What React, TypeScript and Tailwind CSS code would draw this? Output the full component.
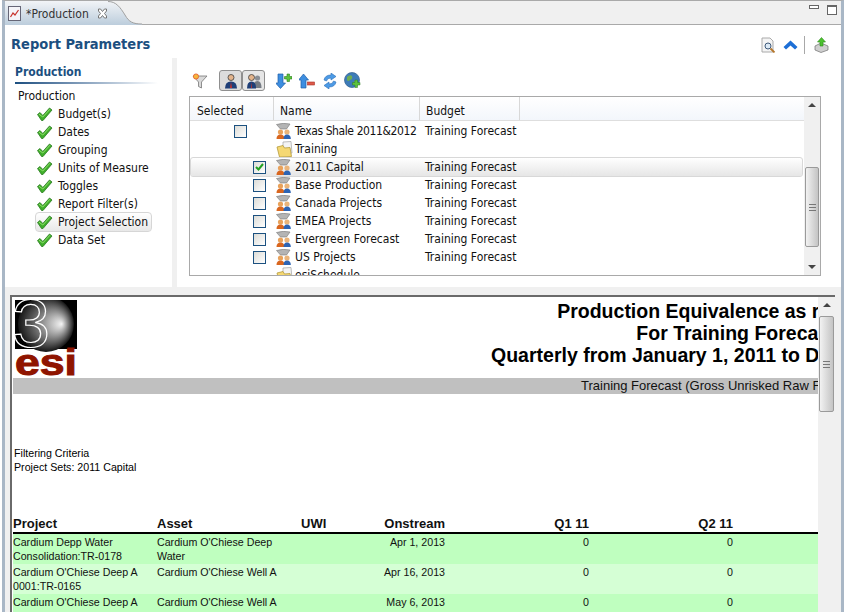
import { Fragment } from "react";

const ui = { fontFamily: '"DejaVu Sans Condensed", "Noto Sans", Tahoma, sans-serif' };
const arial = { fontFamily: '"Liberation Sans", Arial, sans-serif' };

const steps = ["Budget(s)", "Dates", "Grouping", "Units of Measure", "Toggles", "Report Filter(s)", "Project Selection", "Data Set"];

const projects = [
  { name: "Texas Shale 2011&2012", budget: "Training Forecast", box: "outer", tight: true },
  { name: "Training", budget: "", box: "none", folder: true },
  { name: "2011 Capital", budget: "Training Forecast", box: "checked", active: true },
  { name: "Base Production", budget: "Training Forecast", box: "inner" },
  { name: "Canada Projects", budget: "Training Forecast", box: "inner" },
  { name: "EMEA Projects", budget: "Training Forecast", box: "inner" },
  { name: "Evergreen Forecast", budget: "Training Forecast", box: "inner" },
  { name: "US Projects", budget: "Training Forecast", box: "inner" },
  { name: "esiSchedule", budget: "", box: "none", folder: true },
];

const rows = [
  { project: ["Cardium Depp Water", "Consolidation:TR-0178"], asset: ["Cardium O'Chiese Deep", "Water"], date: "Apr 1, 2013", bg: "bg-[#bfffbf]" },
  { project: ["Cardium O'Chiese Deep A", "0001:TR-0165"], asset: ["Cardium O'Chiese Well A"], date: "Apr 16, 2013", bg: "bg-[#d5ffd5]" },
  { project: ["Cardium O'Chiese Deep A"], asset: ["Cardium O'Chiese Well A"], date: "May 6, 2013", bg: "bg-[#bfffbf]" },
];

function Check() {
  return (
    <svg width="17" height="15" viewBox="0 0 17 15" className="shrink-0">
      <path d="M1.5 7.5 L4 5.5 L6.8 8.5 L13.5 1 L16 3 L7 13.5 L5.5 13.5 Z" fill="#3fae2a" stroke="#2b7a22" strokeWidth="0.8" />
      <path d="M3 7.2 L6.8 10 L14 2.2" fill="none" stroke="#8fe06a" strokeWidth="1" />
    </svg>
  );
}

function ProjectIcon() {
  return (
    <svg width="16" height="16" viewBox="0 0 16 16" className="shrink-0">
      <path d="M0.5 1.5 Q7 -0.5 14 1 L10.5 6 L4.5 6 Z" fill="#b4b4b4" stroke="#777" strokeWidth="0.6" />
      <circle cx="4.5" cy="9" r="2.6" fill="#e8a25c" />
      <path d="M0.5 16 Q0.5 11.5 4.5 11.5 Q8.5 11.5 8.5 16 Z" fill="#d9661f" />
      <circle cx="11" cy="9" r="2.6" fill="#eab47a" />
      <path d="M7.5 16 Q7.5 11.5 11 11.5 Q14.8 11.5 14.8 16 Z" fill="#2d64b4" />
    </svg>
  );
}

function FolderIcon() {
  return (
    <svg width="18" height="17" viewBox="0 0 18 17" className="shrink-0">
      <path d="M7 1 L15 0.5 L16 12 L7 13 Z" fill="#f4f4f4" stroke="#a0a0a0" strokeWidth="0.7" />
      <path d="M1 6 L7 4.5 L8.5 7 L14 6.5 L15.5 15.5 L3.5 16 Z" fill="#f5d873" stroke="#b59a3a" strokeWidth="0.8" />
    </svg>
  );
}

function CheckBox({ checked }: { checked?: boolean }) {
  return (
    <span className="w-[13px] h-[13px] border border-[#1c5180] bg-gradient-to-br from-[#dcdcd7] to-white flex items-center justify-center">
      {checked && (
        <svg width="9" height="8" viewBox="0 0 9 8">
          <path d="M1 4 L3.5 6.5 L8 1" fill="none" stroke="#21a121" strokeWidth="2" />
        </svg>
      )}
    </span>
  );
}

function PersonIcon({ two }: { two?: boolean }) {
  return (
    <svg width="16" height="16" viewBox="0 0 16 16">
      {two && <circle cx="11.5" cy="5" r="2.6" fill="#8a8f96" />}
      {two && <path d="M7 15 Q7 8 11.5 8 Q15.5 8 15.5 15 Z" fill="#767c84" />}
      <circle cx={two ? 5.5 : 8} cy="4.5" r="3" fill="#e3b48c" stroke="#3c3c3c" strokeWidth="0.8" />
      <path d={two ? "M1 15.5 Q1 8.5 5.5 8.5 Q10 8.5 10 15.5 Z" : "M2 15.5 Q2 8.5 8 8.5 Q14 8.5 14 15.5 Z"} fill="#1f3f78" />
      <path d={two ? "M5.5 9 L5 15 L6 15 Z" : "M8 9 L7 15 L9 15 Z"} fill="#c8322c" />
    </svg>
  );
}

function Toolbar() {
  return (
    <div className="h-[21px] flex items-center pl-[3px]">
      <svg width="16" height="16" viewBox="0 0 16 16">
        <path d="M1 3 L15 3 L9.5 9 L9.5 15 L6.5 13.5 L6.5 9 Z" fill="#d9d9d9" stroke="#777" strokeWidth="0.8" />
        <circle cx="4" cy="3.5" r="2.6" fill="#f6b73c" stroke="#e5582a" strokeWidth="0.8" />
      </svg>
      <span className="ml-[11px] w-[23px] h-[21px] rounded-[3px] border border-[#8f8f8f] bg-[#dcdcdc] flex items-center justify-center"><PersonIcon /></span>
      <span className="w-[23px] h-[21px] rounded-[3px] border border-[#8f8f8f] bg-[#e6e6e6] flex items-center justify-center"><PersonIcon two /></span>
      <svg width="16" height="16" viewBox="0 0 16 16" className="ml-[11px]">
        <path d="M2 1 L7 1 L7 10 L9.5 10 L4.5 15.5 L-0.5 10 L2 10 Z" fill="#3d8ee0" stroke="#1f5fa8" strokeWidth="0.7" />
        <path d="M11 1 L13.5 1 L13.5 3.5 L16 3.5 L16 6 L13.5 6 L13.5 8.5 L11 8.5 L11 6 L8.5 6 L8.5 3.5 L11 3.5 Z" fill="#5cc23c" stroke="#2f7d22" strokeWidth="0.6" />
      </svg>
      <svg width="16" height="16" viewBox="0 0 16 16" className="ml-[7px]">
        <path d="M4.5 1 L9.5 7 L7 7 L7 15 L2 15 L2 7 L-0.5 7 Z" fill="#3d8ee0" stroke="#1f5fa8" strokeWidth="0.7" />
        <rect x="8.5" y="9" width="7" height="3" fill="#dd5a4a" stroke="#a83226" strokeWidth="0.6" />
      </svg>
      <svg width="16" height="16" viewBox="0 0 16 16" className="ml-[7px]">
        <path d="M2 7 Q3 2 9 2 L9 0 L14 3.5 L9 7 L9 5 Q5 5 4.5 8 Z" fill="#4d9be6" stroke="#2a6db5" strokeWidth="0.6" />
        <path d="M14 9 Q13 14 7 14 L7 16 L2 12.5 L7 9 L7 11 Q11 11 11.5 8 Z" fill="#4d9be6" stroke="#2a6db5" strokeWidth="0.6" />
      </svg>
      <svg width="17" height="17" viewBox="0 0 17 17" className="ml-[6px]">
        <circle cx="8" cy="8" r="7.5" fill="#3e7cb8" stroke="#2f5f8e" strokeWidth="0.7" />
        <path d="M3 5 Q6 2 8 4 Q9 7 6 8 Q4 10 3 8 Z M10 9 Q14 8 14 11 L11 14 Z" fill="#6fae52" />
        <path d="M11 8 L13.5 8 L13.5 10.5 L16 10.5 L16 13 L13.5 13 L13.5 15.5 L11 15.5 L11 13 L8.5 13 L8.5 10.5 L11 10.5 Z" fill="#5cc23c" stroke="#2f7d22" strokeWidth="0.5" />
      </svg>
    </div>
  );
}

function Scrollbar({ top, thumb, className, noDown }: { top: number; thumb: number; className: string; noDown?: boolean }) {
  return (
    <div className={`bg-[#f0f0f0] flex flex-col shrink-0 ${className}`}>
      <div className="h-[16px] flex items-center justify-center shrink-0">
        <span className="w-0 h-0 border-x-[4px] border-x-transparent border-b-[4px] border-b-[#444]" />
      </div>
      <div className="flex-1 min-h-0">
        <div
          className="mx-px rounded-[2px] border border-[#9a9a9a] bg-gradient-to-r from-[#f2f2f2] to-[#c4c4c4] flex items-center justify-center"
          style={{ marginTop: top, height: thumb }}
        >
          <span className="w-[7px] h-[7px] border-y border-[#777] relative after:absolute after:left-0 after:right-0 after:top-[2px] after:h-px after:bg-[#777]" />
        </div>
      </div>
      {!noDown && (
        <div className="h-[16px] flex items-center justify-center shrink-0">
          <span className="w-0 h-0 border-x-[4px] border-x-transparent border-t-[4px] border-t-[#444]" />
        </div>
      )}
    </div>
  );
}

function ProjectGrid() {
  return (
    <div className="mt-[5px] h-[180px] w-[632px] border border-[#a9a9a9] flex bg-white">
      <div className="flex-1 min-w-0 overflow-hidden">
        <div className="h-[24px] flex items-center text-[12px] text-[#111] border-b border-[#dedede] bg-gradient-to-b from-white to-[#f3f6fb]">
          <div className="w-[84px] h-full pl-[7px] pt-[4px] flex items-center border-r border-[#d8d8d8]">Selected</div>
          <div className="w-[146px] h-full pl-[6px] pt-[4px] flex items-center border-r border-[#d8d8d8]">Name</div>
          <div className="w-[100px] h-full pl-[6px] pt-[4px] flex items-center border-r border-[#d8d8d8]">Budget</div>
        </div>
        <div className="pt-[1px]">
          {projects.map((p) => (
            <div
              key={p.name}
              className={`h-[18px] flex items-center text-[12px] text-[#111] whitespace-nowrap ${p.active ? "ml-px rounded-[2px] outline outline-[#d8d8d8] bg-gradient-to-b from-white to-[#e6e6e6] w-[611px]" : "ml-px"}`}
            >
              <div className="w-[84px] shrink-0 flex items-center">
                {p.box === "outer" && <span className="ml-[43px]"><CheckBox /></span>}
                {p.box === "inner" && <span className="ml-[62px]"><CheckBox /></span>}
                {p.box === "checked" && <span className="ml-[62px]"><CheckBox checked /></span>}
              </div>
              <div className="w-[149px] shrink-0 flex items-center gap-[3px] pl-[1px]">
                {p.folder ? <FolderIcon /> : <ProjectIcon />}
                <span className={p.folder ? "-ml-[2px]" : p.tight ? "tracking-[-0.4px]" : ""}>{p.name}</span>
              </div>
              <div className="pl-[1px]">{p.budget}</div>
            </div>
          ))}
        </div>
      </div>
      <Scrollbar top={54} thumb={80} className="w-[16px]" />
    </div>
  );
}

function LeftNav() {
  return (
    <div className="w-[167px] shrink-0 pl-[10px] pt-[5px] text-[12px] text-[#111]">
      <div className="text-[12px] font-bold text-[#1c4f80] leading-[18px]">Production</div>
      <div className="mt-px w-[143px] h-[2px] bg-gradient-to-r from-[#1c4f80] to-white" />
      <div className="mt-[3px] ml-[3px] leading-[18px]">Production</div>
      <div>
        {steps.map((s) => (
          <div
            key={s}
            className={`h-[18px] ml-[21px] flex items-center gap-[5px] whitespace-nowrap ${s === "Project Selection" ? "w-[115px] rounded-[3px] outline outline-[#d6d6d6] bg-gradient-to-b from-white to-[#e8e8e8]" : "w-fit"}`}
          >
            <Check />
            <span>{s}</span>
          </div>
        ))}
      </div>
    </div>
  );
}

function Logo() {
  return (
    <div className="w-[62px] shrink-0">
      <svg width="62" height="76" viewBox="0 0 62 76" className="block">
        <defs>
          <radialGradient id="ball" cx="0.5" cy="0.5" r="0.5" fx="0.78" fy="0.5">
            <stop offset="0" stopColor="#f4f4f4" />
            <stop offset="0.45" stopColor="#8e8e8e" />
            <stop offset="1" stopColor="#141414" />
          </radialGradient>
        </defs>
        <rect width="62" height="49" fill="#000" />
        <circle cx="31" cy="24" r="28" fill="url(#ball)" />
        <text x="-3" y="47" fontSize="68" fill="none" stroke="#fff" strokeWidth="1.2" style={arial}>3</text>
        <text x="0" y="75" fontSize="36" fontWeight="700" fill="#8f1400" stroke="#8f1400" strokeWidth="1" textLength="62" lengthAdjust="spacingAndGlyphs" style={arial}>esi</text>
      </svg>
    </div>
  );
}

function Report() {
  return (
    <div className="mt-[8px] ml-[5px] w-[825px] flex-1 min-h-0 border-t-2 border-l-2 border-[#6a6a6a] border-r-0 flex bg-white">
      <div className="w-[806px] overflow-hidden relative" style={arial}>
        <div className="w-[1100px] pl-px pt-[3px]">
          <div className="pl-[2px] flex">
            <Logo />
          </div>
          <div className="absolute top-px left-0 w-[1448px] text-center text-[19.5px] leading-[22px] font-bold text-black whitespace-nowrap pt-[2px]">
            <div>Production Equivalence as reported to</div>
            <div>For Training Forecast</div>
            <div>Quarterly from January 1, 2011 to December 31, 2012</div>
          </div>
          <div className="mt-[2px] h-[16px] bg-[#c0c0c0] text-[13px] leading-[16px] text-[#111] pl-[568px] whitespace-nowrap">
            Training Forecast (Gross Unrisked Raw Forecast)
          </div>
          <div className="mt-[51px] pl-px pt-px text-[10.67px] leading-[14px] text-black">
            <div>Filtering Criteria</div>
            <div>Project Sets: 2011 Capital</div>
          </div>
          <div className="mt-[42px] h-[16px] flex text-[13px] leading-[16px] font-bold text-[#111]">
            <div className="w-[144px]">Project</div>
            <div className="w-[144px]">Asset</div>
            <div className="w-[60px]">UWI</div>
            <div className="w-[84px] text-right">Onstream</div>
            <div className="w-[144px] text-right">Q1 11</div>
            <div className="w-[144px] text-right">Q2 11</div>
          </div>
          <div className="h-[2px] bg-black w-[806px]" />
          {rows.map((r, i) => (
            <div key={i} className={`${r.bg} h-[30px] w-[805px] flex text-[10.67px] leading-[14px] text-[#111] pt-px`}>
              <div className="w-[144px] whitespace-nowrap">
                {r.project.map((l) => <Fragment key={l}>{l}<br /></Fragment>)}
              </div>
              <div className="w-[144px] whitespace-nowrap">
                {r.asset.map((l) => <Fragment key={l}>{l}<br /></Fragment>)}
              </div>
              <div className="w-[144px] text-right">{r.date}</div>
              <div className="w-[144px] text-right">0</div>
              <div className="w-[144px] text-right">0</div>
            </div>
          ))}
        </div>
      </div>
      <Scrollbar top={3} thumb={96} noDown className="w-[17px]" />
    </div>
  );
}

export default function App() {
  return (
    <div className="w-[847px] h-[612px] overflow-hidden bg-white flex flex-col" style={ui}>
      {/* tab strip */}
      <div className="h-[25px] shrink-0 flex bg-[#f0f0f0] border-t border-[#a9a9a9] ml-[2px] mr-[3px] border-x-[3px] border-x-[#a9b7c6]">
        <div className="w-[103px] h-[24px] pt-px bg-gradient-to-b from-[#f2f4f7] to-[#bccddc] flex items-center text-[12px] text-[#333]">
          <svg width="14" height="15" viewBox="0 0 14 15" className="ml-[3px] shrink-0">
            <rect x="0.5" y="0.5" width="12" height="14" fill="#f4f4f8" stroke="#667" />
            <path d="M2.5 11 L5 7 L7 9 L10.5 4" fill="none" stroke="#c8322c" strokeWidth="1.2" />
          </svg>
          <span className="ml-[4px]">*Production</span>
          <svg width="11" height="11" viewBox="0 0 11 11" className="ml-[8px] shrink-0">
            <path d="M1.5 1 L3.5 1 L5.5 3.5 L7.5 1 L9.5 1 L9.5 3 L7.5 5.5 L9.5 8 L9.5 10 L7.5 10 L5.5 7.5 L3.5 10 L1.5 10 L1.5 8 L3.5 5.5 L1.5 3 Z" fill="#fff" stroke="#777" strokeWidth="1" />
          </svg>
        </div>
        <svg width="34" height="24" viewBox="0 0 34 24" className="shrink-0">
          <defs>
            <linearGradient id="tabfill" x1="0" y1="0" x2="0" y2="1">
              <stop offset="0" stopColor="#f2f4f7" />
              <stop offset="1" stopColor="#bccddc" />
            </linearGradient>
          </defs>
          <path d="M0 0 C8 0 12 6 17 14 C21 21 25 23 34 23 L34 24 L0 24 Z" fill="url(#tabfill)" />
          <path d="M0 0.5 C8 0.5 12 6 17 14 C21 21 25 23 34 23" fill="none" stroke="#a0a0a0" />
        </svg>
        <div className="flex-1 h-[24px] border-b border-[#a9a9a9] flex items-start justify-end pt-[4px] pr-[4px] gap-[8px]">
          <span className="w-[10px] h-[4px] border border-[#666] bg-white" />
          <span className="w-[10px] h-[10px] border border-[#666] border-t-2 bg-white" />
        </div>
      </div>

      <div className="flex-1 min-h-0 flex flex-col ml-[2px] mr-[3px] border-x-[3px] border-x-[#a9b7c6]">
        {/* header */}
        <div className="h-[33px] shrink-0 flex items-center justify-between pl-[6px] pr-[12px]">
          <span className="text-[14.5px] font-bold text-[#1c4f80] mt-[6px]">Report Parameters</span>
          <div className="flex items-center mt-[7px]">
            <svg width="15" height="16" viewBox="0 0 15 16">
              <path d="M1 1 L9 1 L12 4 L12 15 L1 15 Z" fill="#f4f4f4" stroke="#aaa" />
              <circle cx="7" cy="9" r="3" fill="#dbe9f5" stroke="#3f5a7a" />
              <path d="M9.5 11.5 L13.5 15.5" stroke="#b5762a" strokeWidth="1.8" />
            </svg>
            <svg width="15" height="10" viewBox="0 0 15 10" className="ml-[7px]">
              <path d="M0.5 7 L7.5 0.5 L14.5 7 L12 9.5 L7.5 5.5 L3 9.5 Z" fill="#1d6fd6" />
            </svg>
            <span className="ml-[6px] w-px h-[18px] bg-[#a8a8a8]" />
            <svg width="15" height="16" viewBox="0 0 15 16" className="ml-[9px]">
              <path d="M1 9 L7 6 L14 9 L14 13 L7 15.5 L1 13 Z" fill="#cfcfcf" stroke="#6e6e6e" strokeWidth="0.7" />
              <path d="M6 9 L6 5 L3.5 5 L7.5 0.5 L11.5 5 L9 5 L9 9 Z" fill="#4cc22e" stroke="#2d8a1c" strokeWidth="0.6" />
            </svg>
          </div>
        </div>

        <div className="h-[229px] shrink-0 flex">
          <LeftNav />
          <div className="w-[5px] bg-[#f0f0f0] shrink-0" />
          <div className="pl-[12px] pt-[12px]">
            <Toolbar />
            <ProjectGrid />
          </div>
        </div>

        <div className="flex-1 min-h-0 flex flex-col bg-[#f0f0f0]">
          <Report />
        </div>
      </div>
    </div>
  );
}
